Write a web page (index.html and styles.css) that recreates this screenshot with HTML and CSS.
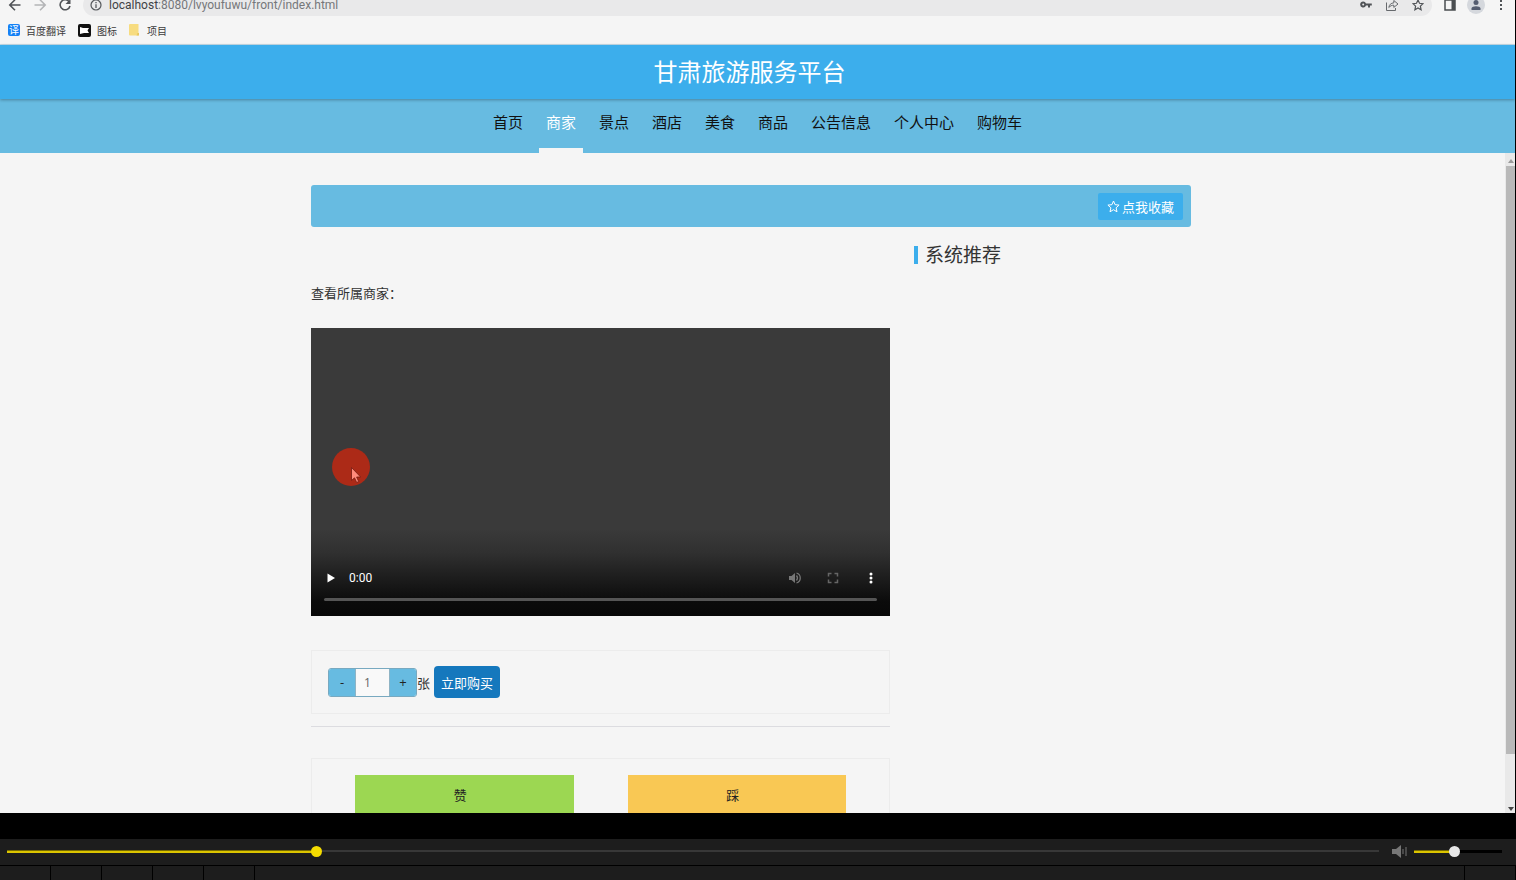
FILE: index.html
```html
<!DOCTYPE html>
<html lang="zh-CN">
<head>
<meta charset="utf-8">
<title>甘肃旅游服务平台</title>
<link rel="stylesheet" href="styles.css">
</head>
<body>
<div class="screen">
  <div class="toolbar">
    <div class="toolbar-row">
      <button class="tool back" aria-label="后退"><svg width="14" height="14" viewBox="0 0 14 14"><path d="M12.500 7H2M7 1.800L1.800 7 7 12.200" fill="none" stroke="#505357" stroke-width="1.600"/></svg></button>
      <button class="tool forward" aria-label="前进"><svg width="14" height="14" viewBox="0 0 14 14"><path d="M1.500 7H12M7 1.800L12.200 7 7 12.200" fill="none" stroke="#b4b5b7" stroke-width="1.600"/></svg></button>
      <button class="tool reload" aria-label="刷新"><svg width="14" height="14" viewBox="0 0 14 14"><path d="M11.300 4A5 5 0 1 0 12 8" fill="none" stroke="#505357" stroke-width="1.600"/><path d="M12.500 1v5h-5z" fill="#505357"/></svg></button>
      <div class="address">
        <svg width="12" height="12" viewBox="0 0 12 12"><circle cx="6" cy="6" r="5" fill="none" stroke="#55585c" stroke-width="1.200"/><path d="M6 5.300V9M6 3v1.300" stroke="#55585c" stroke-width="1.300"/></svg>
        <span class="url">localhost<span class="path">:8080/lvyoufuwu/front/index.html</span></span>
        <svg width="12" height="12" viewBox="0 0 12 12"><path d="M3.200 2.500a3 3 0 1 0 2.800 4h2v2h2v-2h1.800v-2H6a3 3 0 0 0-2.800-2zm0 2a1 1 0 1 1 0 2 1 1 0 0 1 0-2z" fill="#505357" fill-rule="evenodd"/></svg>
        <svg width="14" height="14" viewBox="0 0 14 14"><path d="M1.500 4.500v8h9V10M3.800 9.500c.5-3 2.200-4.500 5-4.600V2.500L13 6 8.800 9.400V7.200c-2 0-3.500.6-5 2.300z" fill="none" stroke="#66696d"/></svg>
        <svg width="12" height="12" viewBox="0 0 12 12"><path d="M6 1l1.500 3.300 3.500.4-2.600 2.400.7 3.600L6 8.900l-3.100 1.800.7-3.600L1 4.700l3.500-.4z" fill="none" stroke="#505357" stroke-width="1.200"/></svg>
      </div>
      <button class="tool panel" aria-label="侧边栏"><svg width="12" height="12" viewBox="0 0 12 12"><path d="M1 1h10v10H1z" fill="none" stroke="#4a4d50" stroke-width="1.500"/><path d="M7.500 1H11v10H7.500z" fill="#4a4d50"/></svg></button>
      <button class="tool user" aria-label="用户"><svg width="18" height="18" viewBox="0 0 18 18"><circle cx="9" cy="9" r="9" fill="#d5d8dd"/><circle cx="9" cy="6.500" r="2.500" fill="#555d70"/><path d="M4.500 14v-1.500c0-3 9-3 9 0V14z" fill="#555d70"/></svg></button>
      <button class="tool more" aria-label="菜单"><svg width="4" height="14" viewBox="0 0 4 14"><path d="M1 2h2v2H1zM1 6h2v2H1zM1 10h2v2H1z" fill="#505357"/></svg></button>
    </div>
  </div>
  <div class="bookmarks">
    <a href="#" class="bookmark"><span class="translate">译</span>百度翻译</a>
    <a href="#" class="bookmark"><svg width="13" height="13" viewBox="0 0 13 13"><rect width="13" height="13" rx="2" fill="#111"/><path d="M2 3l3 1h6L9.500 6.500 11 9H6l-4 1z" fill="#fff"/></svg>图标</a>
    <a href="#" class="bookmark folder"><svg width="10" height="12" viewBox="0 0 10 12"><path d="M0 1q0-1 1-1h8.500v11.500H1q-1 0-1-1z" fill="#f7dc80"/><path d="M8.500 9H10v2.500H7.500z" fill="#e9c75e"/></svg>项目</a>
  </div>

  <header class="site-header"><h1>甘肃旅游服务平台</h1></header>
  <nav class="site-nav">
    <a href="#">首页</a><a href="#" class="active">商家</a><a href="#">景点</a><a href="#">酒店</a><a href="#">美食</a><a href="#">商品</a><a href="#">公告信息</a><a href="#">个人中心</a><a href="#">购物车</a>
  </nav>

  <div class="viewport">
    <main class="page">
      <div class="container">
        <div class="title-bar">
          <button class="favorite"><svg width="13" height="13" viewBox="0 0 13 13"><path d="M6.500 1l1.600 3.700 4 .4-3 2.700.9 4-3.500-2.100L3 11.800l.9-4-3-2.700 4-.4z" fill="none" stroke="#fff"/></svg>点我收藏</button>
        </div>
        <div class="columns">
          <section class="detail">
            <p class="owner">查看所属商家：</p>
            <div class="video">
              <div class="pointer"><svg width="38" height="38" viewBox="0 0 38 38"><circle cx="19" cy="19" r="19" fill="#ac2a17"/><path d="M19.500 19.500v13l3-2.700 2.200 4.700 2-1-2.100-4.500h4z" fill="#ff8b7c" stroke="#741b10" stroke-width=".8"/></svg></div>
              <div class="controls">
                <button aria-label="播放"><svg width="10" height="10" viewBox="0 0 10 10"><path d="M1.500.500L9 5 1.500 9.500z" fill="#fff"/></svg></button>
                <span class="time">0:00</span>
                <button aria-label="音量"><svg width="14" height="14" viewBox="0 0 14 14"><path d="M1 5h2.500L7 2v10L3.500 9H1z" fill="#777"/><path d="M8.500 4.500q2 2.500 0 5M8.500 2c5 1.500 5 8.500 0 10" fill="none" stroke="#777" stroke-width="1.300"/></svg></button>
                <button aria-label="全屏"><svg width="12" height="12" viewBox="0 0 12 12"><path d="M1.500 4.500v-3h3M7.500 1.500h3v3M10.500 7.500v3h-3M4.500 10.500h-3v-3" fill="none" stroke="#666" stroke-width="1.500"/></svg></button>
                <button aria-label="更多"><svg width="4" height="14" viewBox="0 0 4 14"><circle cx="2" cy="3" r="1.500" fill="#fff"/><circle cx="2" cy="7" r="1.500" fill="#fff"/><circle cx="2" cy="11" r="1.500" fill="#fff"/></svg></button>
              </div>
              <div class="timeline"></div>
            </div>
            <div class="buy-box">
              <div class="stepper">
                <button aria-label="减少">-</button><input type="text" value="1" aria-label="数量"><button aria-label="增加">+</button>
              </div>
              <span class="unit">张</span>
              <button class="buy">立即购买</button>
            </div>
            <hr class="divider">
            <div class="vote-box">
              <button class="vote up">赞</button>
              <button class="vote down">踩</button>
            </div>
          </section>
          <aside class="recommend"><h2>系统推荐</h2></aside>
        </div>
      </div>
    </main>
    <div class="scrollbar">
      <svg width="6" height="4" viewBox="0 0 6 4"><path d="M0 4l3-4 3 4z" fill="#9a9a9a"/></svg>
      <div class="thumb"></div>
      <svg width="6" height="4" viewBox="0 0 6 4"><path d="M0 0l3 4 3-4z" fill="#444"/></svg>
    </div>
  </div>
</div>
<footer class="player">
  <div class="seek-row">
    <div class="track seek"><div class="fill"></div><div class="knob"></div></div>
    <svg class="speaker" width="15" height="13" viewBox="0 0 15 13"><path d="M0 4h4l5-4v13L4 9H0z" fill="#777"/><path d="M11 4v5M14 2v9" stroke="#777"/></svg>
    <div class="track volume"><div class="fill"></div><div class="knob"></div></div>
  </div>
  <div class="button-row"><span></span><span></span><span></span><span></span><span></span><span class="wide"></span><span></span></div>
</footer>
</body>
</html>
```
FILE: styles.css
```css
* { box-sizing: border-box; }
body {
  margin: 0;
  height: 100vh;
  display: flex;
  flex-direction: column;
  overflow: hidden;
  background: #000;
  color: #333;
  font-family: "Open Sans", "Noto Sans CJK SC", sans-serif;
  font-size: 13px;
}
button { font: inherit; border: 0; padding: 0; background: none; color: inherit; }
a { color: inherit; text-decoration: none; }
svg { display: block; flex: none; }

.screen {
  flex: 1;
  min-height: 0;
  display: flex;
  flex-direction: column;
  margin-right: 1px;
  margin-bottom: 26px;
  background: #f5f5f5;
  overflow: hidden;
}

.toolbar {
  flex: none;
  height: 16px;
  display: flex;
  align-items: flex-end;
}
.toolbar-row { flex: 1; height: 22px; display: flex; align-items: center; padding: 0 12px 0 8px; }
.tool { display: flex; margin-right: 11px; }
.address {
  flex: 1;
  height: 22px;
  display: flex;
  align-items: center;
  gap: 13px;
  padding: 0 8px 0 7px;
  border-radius: 11px;
  background: #e9e9ea;
}
.url { flex: 1; margin-left: -6px; font: 12px/12px Roboto, sans-serif; color: #3f4246; }
.path { color: #75777a; }
.panel { margin: 0 11px 0 12px; }
.user { margin-right: 14px; }
.more { margin-right: 0; }

.bookmarks {
  flex: none;
  height: 29px;
  display: flex;
  align-items: center;
  gap: 12px;
  padding: 0 8px;
  border-bottom: 1px solid #c5dce8;
  font-size: 10px;
  color: #3c3c3c;
}
.bookmark { display: flex; align-items: center; gap: 6px; }
.folder { gap: 8px; }
.translate {
  width: 12px;
  line-height: 12px;
  border-radius: 2px;
  background: #1581f5;
  color: #fff;
  text-align: center;
}

.site-header {
  flex: none;
  height: 54px;
  padding-right: 16px;
  display: flex;
  align-items: center;
  justify-content: center;
  background: #3caeec;
  box-shadow: 0 1px 3px rgba(0, 0, 0, .3);
  z-index: 1;
}
.site-header h1 { margin: 0; font-size: 24px; line-height: 32px; font-weight: 400; color: #fff; }
.site-nav {
  flex: none;
  height: 54px;
  display: flex;
  justify-content: center;
  gap: 9px;
  background: #67bbe1;
  font-size: 15px;
  line-height: 46px;
  color: #111;
}
.site-nav a { padding: 0 7px; border-bottom: 5px solid transparent; }
.site-nav .active { color: #fff; border-color: #f5f5f5; }

.viewport { flex: 1; min-height: 0; display: flex; }
.page { flex: 1; overflow: hidden; padding: 32px 3px 0 0; }
.container { max-width: 880px; margin: 0 auto; }
.title-bar {
  display: flex;
  justify-content: flex-end;
  padding: 8px 8px 7px;
  border-radius: 3px;
  background: #67bbe1;
}
.favorite {
  display: flex;
  align-items: center;
  gap: 2px;
  height: 27px;
  padding: 0 9px;
  border-radius: 2px;
  background: #3caeec;
  color: #fff;
}
.columns { display: grid; grid-template-columns: 579px 1fr; gap: 24px; }
.owner { margin: 56px 0 24px; line-height: 21px; }
.video {
  position: relative;
  height: 288px;
  display: flex;
  flex-direction: column;
  justify-content: flex-end;
  padding: 0 13px 15px;
  background: linear-gradient(#3a3a3a 0 70%, #303030 78%, #0b0b0b 95%, #080808);
}
.pointer { position: absolute; left: 21px; top: 120px; }
.controls {
  display: flex;
  align-items: center;
  gap: 26px;
  height: 20px;
  padding-left: 1px;
  margin-bottom: 10px;
  color: #fff;
}
.controls button { width: 12px; display: flex; justify-content: center; }
.time { flex: 1; margin-left: -14px; font: 12px Roboto, sans-serif; }
.timeline { height: 3px; border-radius: 2px; background: #555; }

.buy-box {
  display: flex;
  align-items: center;
  margin-top: 34px;
  padding: 15px 16px;
  border: 1px solid #ececec;
}
.stepper {
  display: flex;
  height: 29px;
  border: 1px solid #78a9c0;
  border-radius: 3px;
  overflow: hidden;
}
.stepper button { width: 26px; background: #67bbe1; color: #222; }
.stepper input {
  width: 35px;
  border: solid #8fb4c5;
  border-width: 0 1px;
  padding: 0 8px;
  background: #f9f9f9;
  font: inherit;
  font-size: 12px;
  color: #666;
}
.buy {
  height: 32px;
  margin-left: 4px;
  padding: 0 7px;
  border-radius: 4px;
  background: #1578bd;
  color: #fff;
}
.divider { margin: 12px 0 31px; border: 0; border-top: 1px solid #dcdce0; }
.vote-box {
  display: grid;
  grid-template-columns: 1fr 1fr;
  gap: 54px;
  padding: 16px 43px;
  border: 1px solid #ececec;
}
.vote { height: 38px; padding-right: 8px; color: #222; }
.up { background: #9cd752; }
.down { background: #f9c854; }
.recommend h2 {
  display: flex;
  align-items: center;
  gap: 7px;
  margin: 14px 0 0;
  font-size: 19px;
  line-height: 28px;
  font-weight: 400;
}
.recommend h2::before { content: ""; width: 4px; height: 18px; background: #3caeec; }

.scrollbar {
  width: 10px;
  display: flex;
  flex-direction: column;
  align-items: flex-end;
  padding: 6px 1px 2px;
  background: #e9e9e9;
}
.thumb { width: 9px; flex: 1; margin: 3px -1px 53px 0; background: #b9b9b9; }

.player { flex: none; background: #1d1d1d; }
.seek-row { height: 26px; display: flex; align-items: center; padding: 0 14px 2px 7px; }
.track { position: relative; display: flex; align-items: center; height: 3px; background: #383838; }
.seek { flex: 1; height: 2px; }
.fill { height: 3px; background: #dcc500; border: solid #776b00; border-width: 1px 0 0; }
.seek .fill { width: 22.5%; }
.knob { flex: none; width: 11px; height: 11px; margin-left: -5px; border-radius: 50%; background: #f5dc00; }
.speaker { margin: 0 7px 0 13px; }
.volume { width: 88px; background: #000; }
.volume .fill { width: 45%; }
.volume .knob { background: #e8e8e8; }
.button-row { display: flex; height: 15px; border-top: 1px solid #000; }
.button-row span { width: 51px; border-right: 1px solid #000; }
.button-row .wide { flex: 1; }
```
